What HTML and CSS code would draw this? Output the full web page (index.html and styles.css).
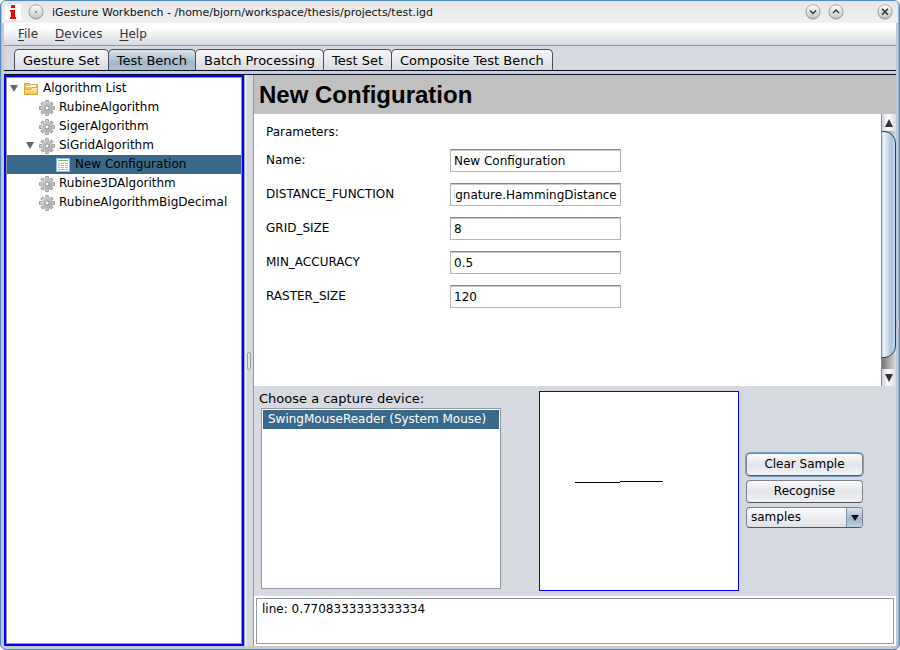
FILE: index.html
```
<!DOCTYPE html>
<html lang="en">
<head>
<meta charset="utf-8">
<title>iGesture Workbench</title>
<link rel="stylesheet" href="styles.css">
</head>
<body>
<svg class="defs" aria-hidden="true">
  <defs>
    <linearGradient id="metal" x1="0" y1="0" x2="1" y2="1"><stop offset="0" stop-color="#e0e0e0"/><stop offset="1" stop-color="#999"/></linearGradient>
    <linearGradient id="gold" x1="0" y1="0" x2="0" y2="1"><stop offset="0" stop-color="#fff3b4"/><stop offset="1" stop-color="#f3c04e"/></linearGradient>
    <linearGradient id="knob" x1="0" y1="0" x2="0" y2="1"><stop offset="0" stop-color="#fff"/><stop offset="1" stop-color="#c4c4c4"/></linearGradient>
    <symbol id="gear" viewBox="0 0 16 16">
      <g stroke="#858585" stroke-width="3.4"><path d="M8 .2v15.600M.2 8h15.600M2.600 2.600l10.800 10.800M13.400 2.600L2.600 13.400"/></g>
      <g stroke="#c6c6c6" stroke-width="2"><path d="M8 .9v14.200M.9 8h14.200M3 3l10 10M13 3L3 13"/></g>
      <circle cx="8" cy="8" r="5.600" fill="url(#metal)"/>
      <circle cx="8" cy="8" r="4" fill="none" stroke="#bdbdbd"/>
      <circle cx="8" cy="8" r="2.100" fill="#fff" stroke="#858585" stroke-width=".9"/>
    </symbol>
    <symbol id="folder" viewBox="0 0 16 16">
      <path d="M1.500 13.500v-11h5l1 1h7v10z" fill="#f3c65d" stroke="#d9a336"/>
      <path d="M3 5.500h10M8 4.500h5" stroke="#fffbe8" stroke-width="1"/>
      <path d="M1.500 13.500v-5h6l1.500-2h5.500v7z" fill="url(#gold)" stroke="#d9a336"/>
    </symbol>
    <symbol id="sheet" viewBox="0 0 16 16">
      <rect x="1.500" y="1.500" width="13" height="13" fill="#fff" stroke="#8fb4e8"/>
      <path d="M3 3.500h10" stroke="#7dbb72"/>
      <path d="M3 6.500h2M6 6.500h3M10 6.500h3M3 8.500h2M6 8.500h3M10 8.500h3M3 10.500h2M6 10.500h3M10 10.500h3M3 12.500h2M6 12.500h3M10 12.500h3" stroke="#a3b7da"/>
    </symbol>
    <symbol id="disc" viewBox="0 0 16 16">
      <circle cx="8" cy="8.300" r="7.200" fill="#aaa"/><circle cx="8" cy="7.700" r="7" fill="url(#knob)" stroke="#999" stroke-width=".8"/>
    </symbol>
  </defs>
</svg>
<div class="window">
  <header class="titlebar">
    <svg class="logo" viewBox="0 0 16 16" aria-hidden="true"><path fill="#fff" d="M0 0h16v16H0z"/><path fill="#f00" d="M6 1h4v3H6zM5 6h5v7h1v2H5v-2h1V8H5z"/></svg>
    <button class="round" aria-label="Window menu"><svg viewBox="0 0 16 16"><use href="#disc"/><circle cx="8" cy="8" r="1" fill="#777"/></svg></button>
    <h1 class="caption">iGesture Workbench - /home/bjorn/workspace/thesis/projects/test.igd</h1>
    <div class="controls">
      <button class="round" aria-label="Minimize"><svg viewBox="0 0 16 16"><use href="#disc"/><path d="M5 6.500l3 3 3-3" fill="none" stroke="#333" stroke-width="1.400"/></svg></button>
      <button class="round" aria-label="Maximize"><svg viewBox="0 0 16 16"><use href="#disc"/><path d="M5 9l3-3 3 3" fill="none" stroke="#333" stroke-width="1.400"/></svg></button>
      <button class="round close" aria-label="Close"><svg viewBox="0 0 16 16"><use href="#disc"/><path d="M5 4.700l6 6M11 4.700l-6 6" stroke="#333" stroke-width="1.600"/></svg></button>
    </div>
  </header>
  <nav class="menubar">
    <button><u>F</u>ile</button><button><u>D</u>evices</button><button><u>H</u>elp</button>
  </nav>
  <div class="tabs" role="tablist">
    <button role="tab">Gesture Set</button>
    <button role="tab" class="active" aria-selected="true">Test Bench</button>
    <button role="tab">Batch Processing</button>
    <button role="tab">Test Set</button>
    <button role="tab">Composite Test Bench</button>
  </div>
  <div class="strip"></div>
  <main class="content">
    <aside class="sidebar">
      <ul class="tree">
        <li><div class="node"><i class="twisty"></i><svg class="icon"><use href="#folder"/></svg>Algorithm List</div>
          <ul>
            <li><div class="node"><svg class="icon"><use href="#gear"/></svg>RubineAlgorithm</div></li>
            <li><div class="node"><svg class="icon"><use href="#gear"/></svg>SigerAlgorithm</div></li>
            <li><div class="node"><i class="twisty"></i><svg class="icon"><use href="#gear"/></svg>SiGridAlgorithm</div>
              <ul><li><div class="node selected"><svg class="icon"><use href="#sheet"/></svg>New Configuration</div></li></ul>
            </li>
            <li><div class="node"><svg class="icon"><use href="#gear"/></svg>Rubine3DAlgorithm</div></li>
            <li><div class="node"><svg class="icon"><use href="#gear"/></svg>RubineAlgorithmBigDecimal</div></li>
          </ul>
        </li>
      </ul>
    </aside>
    <div class="divider"><span class="grip"></span></div>
    <section class="detail">
      <h2 class="heading">New Configuration</h2>
      <div class="params">
        <form class="form">
          <p>Parameters:</p>
          <div class="field"><label for="name">Name:</label><input id="name" value="New Configuration"></div>
          <div class="field"><label for="distance">DISTANCE_FUNCTION</label><input id="distance" value="org.ximtec.igesture.algorithm.signature.HammingDistance"></div>
          <div class="field"><label for="grid">GRID_SIZE</label><input id="grid" value="8"></div>
          <div class="field"><label for="accuracy">MIN_ACCURACY</label><input id="accuracy" value="0.5"></div>
          <div class="field"><label for="raster">RASTER_SIZE</label><input id="raster" value="120"></div>
        </form>
        <div class="scrollbar">
          <button class="arrow" aria-label="Scroll up"><svg viewBox="0 0 8 8"><path d="M4 0l4 8H0z" fill="#333"/></svg></button>
          <div class="track"><div class="thumb"></div></div>
          <button class="arrow" aria-label="Scroll down"><svg viewBox="0 0 8 8"><path d="M4 8l4-8H0z" fill="#333"/></svg></button>
        </div>
      </div>
      <div class="bench">
        <div class="devices">
          <span id="devlabel" class="devlabel">Choose a capture device:</span>
          <ul class="list" role="listbox" aria-labelledby="devlabel"><li role="option" aria-selected="true">SwingMouseReader (System Mouse)</li></ul>
        </div>
        <svg class="canvas" viewBox="0 0 198 198" aria-label="Gesture sample"><path d="M35 90.500h45M80 89.500h43" stroke="#000" shape-rendering="crispEdges"/></svg>
        <div class="actions">
          <button class="btn focus">Clear Sample</button>
          <button class="btn">Recognise</button>
          <div class="combo"><select aria-label="Sample set"><option>samples</option></select><span class="drop"><svg viewBox="0 0 8 6"><path d="M0 0h8L4 6z" fill="#111"/></svg></span></div>
        </div>
      </div>
      <div class="result"><output>line: 0.7708333333333334</output></div>
    </section>
    <div class="edge"><span class="grip"></span></div>
  </main>
</div>
<script src="main.js"></script>
</body>
</html>
```
FILE: main.js
```
// Long class names are shown from their end.
const field = document.getElementById("distance");
field.scrollLeft = field.scrollWidth;
```
FILE: styles.css
```
* { box-sizing: border-box; }
body { margin: 0; background: #fff; font: 12px/19px "DejaVu Sans", sans-serif; color: #000; }
button, input, select { font: inherit; color: inherit; }
button { border: 0; padding: 0; background: none; }
ul, p, h1, h2 { margin: 0; padding: 0; list-style: none; }
svg { display: block; }
.defs { position: absolute; width: 0; height: 0; }
.window { display: flex; flex-direction: column; height: 100vh; overflow: hidden; border: 1px solid #4f8ac4; border-radius: 6px; background: #c9c9c9; padding: 0 3px 3px; box-shadow: inset 1px 0 #a9c4df, inset -1px 0 #8fb4d8, inset 0 1px #b8cfe6; }
.titlebar { display: flex; align-items: center; height: 22px; margin: 0 -2px; padding: 0 5px 0 3px; background: linear-gradient(#e6e6e6, #f1f1f1); }
.logo { width: 16px; height: 16px; }
.round { width: 16px; height: 16px; }
.round svg { width: 16px; height: 16px; }
.titlebar > .round { margin: 0 8px 0 7px; }
.caption { font-size: 11px; font-weight: 400; color: #111; }
.controls { display: flex; gap: 7px; margin-left: auto; }
.close { margin-left: 26px; }
.menubar { display: flex; gap: 17px; height: 23px; padding: 0 14px; border-bottom: 1px solid #8f96a3; background: linear-gradient(#fff 20%, #d6d9e2); color: #333; }
.menubar u { text-underline-offset: 2px; }
.tabs { display: flex; height: 24px; padding: 3px 10px 0; background: #d6d9e2; font-size: 13px; }
.tabs button { flex: none; padding: 0 8px; border: 1px solid #4b5057; border-bottom: 0; border-radius: 5px 5px 0 0; background: linear-gradient(#f8f8fa, #d9dbe2); white-space: nowrap; }
.tabs button + button { margin-left: -1px; }
.tabs .active { background: linear-gradient(#dbe3eb, #a3bacd 60%, #a9c0d4); }
.strip { height: 5px; border: solid #0d0f20; border-width: 1px 0; background: #c3cfe3; }
.content { position: relative; display: flex; flex: 1; min-height: 0; background: #d6d9df; }
.sidebar { flex: 0 0 240px; border: 2px solid #00f; outline: 1px solid #9297a1; outline-offset: -3px; background: #fff; padding: 2px 1px; }
.node { display: flex; align-items: center; height: 19px; padding-left: 16px; white-space: nowrap; }
.tree ul .node { padding-left: 32px; }
.tree ul ul .node { padding-left: 48px; }
.icon { width: 16px; height: 16px; margin-right: 4px; }
.twisty { width: 8px; height: 7px; margin: 0 5px 0 -13px; background: #666; clip-path: polygon(0 0, 100% 0, 50% 100%); }
.selected { background: #39698a; }
.divider { display: flex; align-items: center; justify-content: center; flex: 0 0 10px; border-left: 1px solid #aaa; border-right: 1px solid #9297a1; background: linear-gradient(90deg, #edeff2, #d6d9df 30%); }
.grip { width: 4px; height: 18px; border: 1px solid #999da5; border-radius: 2px; background: #e1e4e8; }
.edge { position: absolute; right: -3px; top: 244px; overflow: hidden; width: 3px; }
.edge .grip { display: block; height: 10px; border-color: #b0b4ba; background: #c9c9c9; }
.detail { flex: 1; min-width: 0; display: flex; flex-direction: column; }
.heading { height: 39px; padding: 0 5px; background: #c0c0c0; font: bold 24px/40px "Liberation Sans", sans-serif; }
.params { display: flex; flex: 1; min-height: 0; background: #fff; }
.form { flex: 1; padding: 9px 12px; }
.form p { margin-bottom: 7px; }
.field { display: grid; grid-template-columns: 184px 171px; align-items: center; height: 23px; margin-bottom: 11px; }
.field input { width: 100%; height: 23px; padding: 0 3px; border: 1px solid #b5b5b5; border-top: 1px solid #858585; border-radius: 0; background: #fff; box-shadow: inset 0 1px #c9c9c9; outline: 0; }
.scrollbar { display: flex; flex-direction: column; width: 15px; border-left: 1px solid #888c93; background: #d6d9df; }
.arrow { display: grid; place-items: center; height: 17px; background: linear-gradient(90deg, #d0d3d8, #fff 45%, #d6d9df); }
.arrow svg { width: 8px; height: 8px; }
.track { flex: 1; overflow: hidden; padding-bottom: 11px; background: linear-gradient(90deg, #777, #d9dbe0); }
.thumb { height: 100%; margin-left: -6px; border: 1px solid #23415f; border-radius: 4px 12px 12px 4px; background: linear-gradient(90deg, #cfe0ee 30%, #e9f3fb 40%, #a9c4dc 80%, #c6dbee); }
.bench { display: flex; height: 210px; padding: 3px 5px 0; }
.devices { width: 242px; }
.devlabel { display: block; font-size: 13px; }
.list { height: 181px; margin-left: 2px; padding: 1px; border: 1px solid #9297a1; background: #fff; }
.list li { padding-left: 5px; background: #39698a; color: #fff; white-space: nowrap; }
.canvas { flex: none; width: 200px; height: 200px; margin: 2px 7px 0 38px; border: 1px solid #00f; background: #fff; }
.actions { display: flex; flex-direction: column; width: 117px; padding-top: 64px; gap: 4px; }
.btn { height: 23px; border: 1px solid #7d828a; border-bottom-color: #50555c; border-radius: 4px; background: linear-gradient(#fbfbfc, #e2e4e9 50%, #f2f3f6); }
.focus { box-shadow: 0 0 0 1px #73a4d1; }
.combo { display: flex; height: 21px; overflow: hidden; border: 1px solid #7d828a; border-bottom-color: #50555c; border-radius: 4px; background: linear-gradient(#fbfbfc, #dfe1e7); position: relative; }
.combo select { flex: 1; padding: 0 4px; border: 0; appearance: none; background: none; outline: 0; }
.drop { position: absolute; right: 0; top: 0; bottom: 0; display: grid; place-items: center; width: 16px; border-left: 1px solid #7e95aa; background: linear-gradient(#dde6ee, #9fb8cc 60%, #bdd3e4); pointer-events: none; }
.drop svg { width: 8px; height: 6px; }
.result { height: 50px; padding: 2px; background: #fff; }
.result output { display: block; height: 46px; padding: 1px 5px; border: 1px solid #9297a1; }
```
